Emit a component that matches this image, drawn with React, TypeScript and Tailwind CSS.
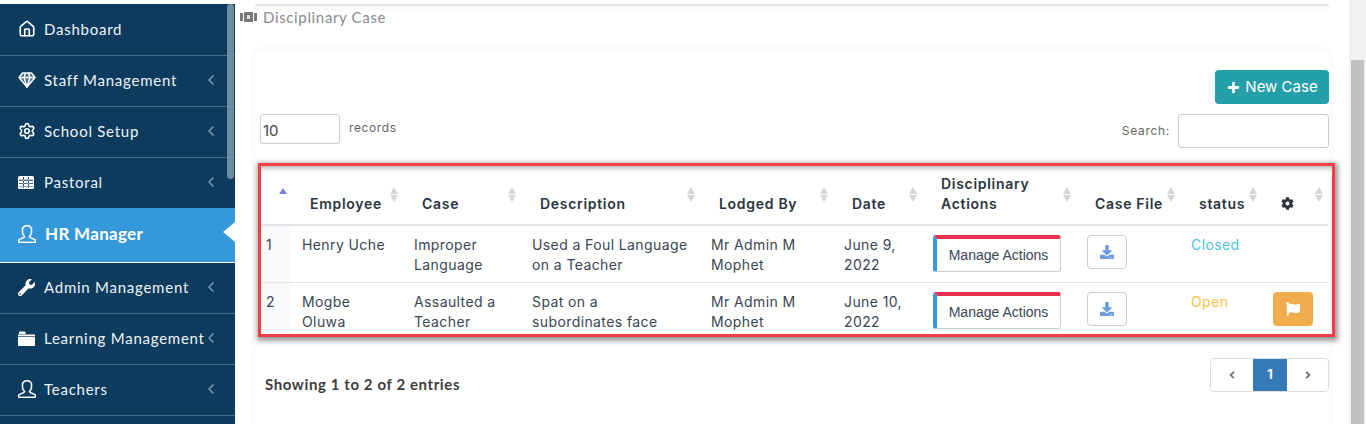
import type { ReactNode } from "react"
import { House, Settings, Plus, ChevronLeft } from "lucide-react"
import { FaWrench, FaDownload, FaFlag, FaCog, FaAngleLeft, FaAngleRight } from "react-icons/fa"
import { SlUser } from "react-icons/sl"

function GemIcon() {
  return (
    <svg width="18" height="16" viewBox="0 0 18 16" fill="none" stroke="currentColor" strokeWidth="1.5" strokeLinejoin="round">
      <path d="M4.5 1h9L17 5.5 9 15 1 5.5z" fill="currentColor" fillOpacity="0.25" />
      <path d="M1 5.5h16M6 5.5 9 15l3-9.5M6 5.5 7.5 1M12 5.5 10.5 1" />
    </svg>
  )
}

function GridIcon() {
  return (
    <svg width="16" height="13" viewBox="0 0 16 13" fill="currentColor">
      <path d="M1.5 0h13A1.5 1.5 0 0 1 16 1.5v10a1.5 1.5 0 0 1-1.5 1.5h-13A1.5 1.5 0 0 1 0 11.5v-10A1.5 1.5 0 0 1 1.5 0z" />
      <path d="M1 3.8h14v.9H1zM1 7.2h14v.9H1zM1 10.4h14v.7H1zM5 1v11h.9V1zM10.1 1v11h.9V1z" fill="#0c3b5e" />
    </svg>
  )
}

function FolderIcon() {
  return (
    <svg width="17" height="15" viewBox="0 0 17 15" fill="currentColor">
      <path d="M0 3.5h17V15H0z" />
      <path d="M1 3V1.5C1 1 1.4.5 2 .5h4.500C7 .5 7.500 1 7.500 1.500V3z" />
      <path d="M0 5.200h17v.7H0z" fill="#0c3b5e" />
    </svg>
  )
}

const navItems: { label: string; icon: ReactNode; arrow?: boolean; active?: boolean }[] = [
  { label: "Dashboard", icon: <House size={18} strokeWidth={2.2} /> },
  { label: "Staff Management", icon: <GemIcon />, arrow: true },
  { label: "School Setup", icon: <Settings size={18} strokeWidth={2.2} />, arrow: true },
  { label: "Pastoral", icon: <GridIcon />, arrow: true },
  { label: "HR Manager", icon: <SlUser size={18} stroke="currentColor" strokeWidth={24} />, active: true },
  { label: "Admin Management", icon: <FaWrench size={17} />, arrow: true },
  { label: "Learning Management", icon: <FolderIcon />, arrow: true },
  { label: "Teachers", icon: <SlUser size={18} stroke="currentColor" strokeWidth={24} />, arrow: true },
]

const rows = [
  {
    id: 1,
    employee: "Henry Uche",
    caseName: "Improper Language",
    description: "Used a Foul Language on a Teacher",
    date: "June 9, 2022",
    status: "Closed",
  },
  {
    id: 2,
    employee: "Mogbe Oluwa",
    caseName: "Assaulted a Teacher",
    description: "Spat on a subordinates face",
    date: "June 10, 2022",
    status: "Open",
  },
]

function SortIcon() {
  return (
    <span className="absolute right-[5px] top-[21px] flex flex-col gap-px">
      <span className="h-0 w-0 border-x-[4px] border-b-[7px] border-x-transparent border-b-[#d4d6da]" />
      <span className="h-0 w-0 border-x-[4px] border-t-[7px] border-x-transparent border-t-[#d4d6da]" />
    </span>
  )
}

function Th({ children, className = "" }: { children?: ReactNode; className?: string }) {
  return (
    <th className={`relative h-[59px] border-b-2 border-[#e2e5ea] pb-[10px] pl-[19px] pr-[10px] text-left align-bottom text-[14px] font-semibold leading-[20px] tracking-[0.7px] text-[#2b3440] ${className}`}>
      {children}
      <SortIcon />
    </th>
  )
}

export default function App() {
  return (
    <div
      className="flex h-[424px] overflow-hidden bg-white text-[14px] text-[#3a4654]"
      style={{ fontFamily: "Inter, 'Liberation Sans', sans-serif" }}
    >
      {/* Sidebar */}
      <div className="mt-[4px] w-[235px] shrink-0">
        <aside className="relative h-[420px] overflow-hidden bg-[#0c3b5e] pt-px text-white">
          <div className="absolute right-[1px] top-0 h-[175px] w-[7px] rounded-full bg-[#6e8ba0]" />
          {navItems.map((item) =>
            item.active ? (
              <div key={item.label} className="relative -mt-px flex h-[55px] items-center border-b border-white bg-[#3498db] pb-[2px] pl-[18px]">
                <span className="w-[27px]">{item.icon}</span>
                <span className="text-[17px] font-bold tracking-[0.3px]" style={{ fontFamily: "Lato, sans-serif" }}>{item.label}</span>
                <span className="absolute right-0 top-[14px] h-0 w-0 border-y-[10px] border-r-[12px] border-y-transparent border-r-white" />
              </div>
            ) : (
              <div key={item.label} className="flex h-[51px] items-center border-b border-[#4a6d86] pb-[2px] pl-[18px]">
                <span className="w-[26px]">{item.icon}</span>
                <span className="whitespace-nowrap text-[15px] tracking-[0.75px] text-[#eef3f7]" style={{ fontFamily: "Lato, sans-serif" }}>{item.label}</span>
                {item.arrow && <ChevronLeft className="absolute left-[203px] text-[#7c96a9]" size={16} strokeWidth={2.5} />}
              </div>
            )
          )}
        </aside>
      </div>

      {/* Main */}
      <main className="min-w-0 flex-1 pl-[5px]">
        <div className="ml-[15px] mr-[20px] mt-[4px] h-[2px] bg-[#e6e6e6] shadow-[0_2px_4px_rgba(0,0,0,0.08)]" />
        <div className="mt-[2px] flex h-[18px] items-center gap-[6px] text-[15px] tracking-[0.65px] text-[#8a8a92]">
          <svg width="17" height="10" viewBox="0 0 17 10" fill="#777">
            <path d="M0 1h3v8H0zM4 0h9v10H4zM14 1h3v8h-3z" />
            <path d="M7 3h3v4H7z" fill="#ddd" />
          </svg>
          <span style={{ fontFamily: "Lato, sans-serif" }}>Disciplinary Case</span>
        </div>

        <section className="ml-[15px] mr-[20px] mt-[24px] h-[400px] rounded-t-[4px] bg-white px-[5px] pt-[20px] shadow-[0_0_8px_rgba(0,0,0,0.05)]">
          <div className="flex justify-end">
            <button className="-mr-[5px] flex h-[34px] w-[114px] items-center justify-center gap-[4px] rounded-[4px] bg-[#259fa9] text-[15px] text-white">
              <Plus size={15} strokeWidth={4.5} />
              New Case
            </button>
          </div>

          <div className="mt-[10px] flex items-start">
            <input readOnly value="10" className="h-[30px] w-[80px] rounded-[3px] border border-[#ccc] px-[2px] pt-[3px] text-[15px] text-[#444]" />
            <span className="ml-[9px] mt-[5px] text-[12px] tracking-[0.6px] text-[#666]">records</span>
            <span className="ml-auto mt-[8px] text-[12px] tracking-[0.7px] text-[#666]">Search:</span>
            <input className="-mr-[5px] ml-[8px] h-[34px] w-[151px] rounded-[3px] border border-[#ccc]" />
          </div>

          {/* Highlighted table */}
          <div className="-ml-[2px] mt-[15px] h-[174px] w-[1077px] overflow-hidden border-[3px] border-[#f23f47] bg-white shadow-[1px_2px_5px_2px_rgba(0,0,0,0.4),inset_0_7px_6px_-6px_rgba(0,0,0,0.4)]">
            <table className="w-[1067px] table-fixed border-collapse">
              <colgroup>
                <col className="w-[30px]" />
                <col className="w-[112px]" />
                <col className="w-[118px]" />
                <col className="w-[179px]" />
                <col className="w-[133px]" />
                <col className="w-[89px]" />
                <col className="w-[154px]" />
                <col className="w-[104px]" />
                <col className="w-[82px]" />
                <col className="w-[66px]" />
              </colgroup>
              <thead>
                <tr>
                  <th className="relative h-[59px] border-b-2 border-[#e2e5ea]">
                    <span className="absolute right-[4px] top-[22px] h-0 w-0 border-x-[4.5px] border-b-[6px] border-x-transparent border-b-[#7c7cdd]" />
                  </th>
                  <Th>Employee</Th>
                  <Th>Case</Th>
                  <Th>Description</Th>
                  <Th>Lodged By</Th>
                  <Th>Date</Th>
                  <Th className="pr-[30px]">Disciplinary Actions</Th>
                  <Th>Case File</Th>
                  <Th>status</Th>
                  <Th><FaCog size={13} className="mb-[4px]" /></Th>
                </tr>
              </thead>
              <tbody>
                {rows.map((row) => (
                  <tr key={row.id} className="border-b border-[#e2e5ea] align-top leading-[20px] tracking-[0.4px]">
                    <td className="h-[57px] bg-[#f9fafc] pl-[5px] pt-[9px]">{row.id}</td>
                    <td className="pl-[11px] pr-[8px] pt-[9px]">{row.employee}</td>
                    <td className="pl-[11px] pr-[8px] pt-[9px]">{row.caseName}</td>
                    <td className="pl-[11px] pr-[10px] pt-[9px]">{row.description}</td>
                    <td className="pl-[11px] pr-[8px] pt-[9px]">Mr Admin M Mophet</td>
                    <td className="pl-[11px] pr-[8px] pt-[9px]">{row.date}</td>
                    <td className="pl-[11px] pt-[9px]">
                      <button className="h-[37px] w-[128px] rounded-[3px] border border-l-[4px] border-t-[4px] border-[#ccc] border-l-[#3498db] border-t-[#e8304f] bg-white text-[14px] tracking-normal" style={{ fontFamily: "'Liberation Sans', sans-serif" }}>
                        Manage Actions
                      </button>
                    </td>
                    <td className="pl-[11px] pt-[9px]">
                      <button className="flex h-[34px] w-[40px] items-center justify-center rounded-[4px] border border-[#ccc] bg-white text-[#6c9be0]">
                        <FaDownload size={14} />
                      </button>
                    </td>
                    <td className={`pl-[11px] pt-[9px] ${row.status === "Closed" ? "text-[#4dc5dc]" : "text-[#f5c242]"}`}>{row.status}</td>
                    <td className="pl-[11px] pt-[9px]">
                      {row.status === "Open" && (
                        <button className="flex h-[34px] w-[40px] items-center justify-center rounded-[4px] bg-[#f0ad4e] text-white">
                          <FaFlag size={14} />
                        </button>
                      )}
                    </td>
                  </tr>
                ))}
              </tbody>
            </table>
          </div>

          <div className="mt-[21px] flex items-start justify-between">
            <span className="mt-[15px] pl-[5px] text-[15px] font-bold tracking-[0.6px] text-[#3d3d3d]" style={{ fontFamily: "Lato, sans-serif" }}>
              Showing 1 to 2 of 2 entries
            </span>
            <div className="-mr-[5px] flex h-[34px] w-[119px] overflow-hidden rounded-[4px] border border-[#ddd] text-[#777]">
              <span className="flex w-[42px] items-center justify-center"><FaAngleLeft size={12} /></span>
              <span className="flex w-[34px] items-center justify-center bg-[#337ab7] text-[13px] font-bold text-white">1</span>
              <span className="flex flex-1 items-center justify-center"><FaAngleRight size={12} /></span>
            </div>
          </div>
        </section>
      </main>

      {/* Page scrollbar */}
      <div className="w-[17px] shrink-0 bg-[#f1f1f1] px-[2px] pt-[60px]">
        <div className="h-full bg-[#c1c1c1]" />
      </div>
    </div>
  )
}
